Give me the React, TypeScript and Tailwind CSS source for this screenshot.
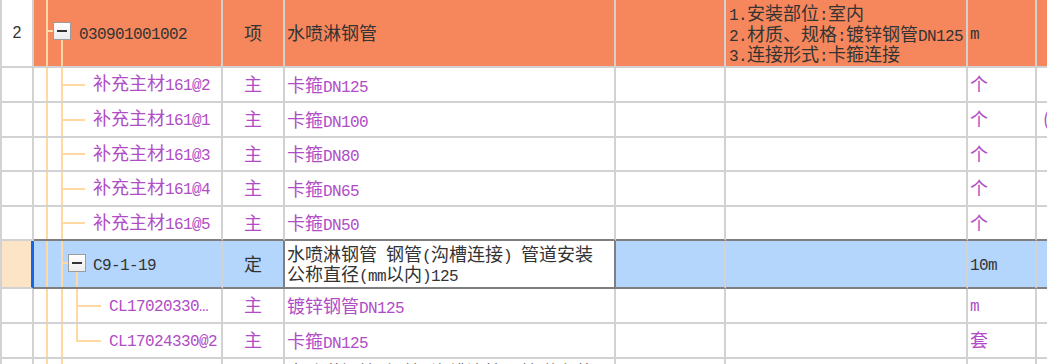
import React from "react";

const LAT = /([\u0000-\u00ff…]+)/;

// latin runs in a narrow mono face, cjk in Noto
const Txt = ({ s }: { s: string }) => (
  <span>
    {s.split(LAT).map((p, i) =>
      !p ? null : LAT.test(p) ? (
        <span key={i} className="font-['Liberation_Mono',monospace] text-[16px] tracking-[-0.6px]">
          {p}
        </span>
      ) : (
        <span key={i}>{p}</span>
      )
    )}
  </span>
);

const line = "absolute bg-[#ffd8a2]";

const MinusBox = ({ cls }: { cls: string }) => (
  <div
    className={
      "absolute w-[18px] h-[18px] border border-[#9c9c9c] bg-gradient-to-b from-white to-[#ececec] flex items-center justify-center " +
      cls
    }
  >
    <div className="w-[10px] h-[2px] bg-[#333]" />
  </div>
);

type RowProps = {
  h: string;
  kind: "head" | "child" | "sel" | "gchild" | "gchildLast" | "tail";
  num?: string;
  code?: string;
  type?: string;
  name?: string[];
  feat?: string[];
  unit?: string;
  last?: string;
  darkBottom?: boolean;
};

const Row = ({ h, kind, num, code, type, name, feat, unit, last, darkBottom }: RowProps) => {
  const sel = kind === "sel";
  const head = kind === "head";
  const bg = head ? "bg-[#f6875c]" : sel ? "bg-[#b5d6fc]" : "bg-white";
  const tone = head || sel || kind === "tail" ? "text-[#333]" : "text-[#b04cc6]";
  const bb = darkBottom || sel ? "border-b-[#7f7f7f]" : "border-b-[#d2d2d2]";
  const cell = `${h} shrink-0 border-b-2 ${bb} border-r-2 flex items-center overflow-hidden whitespace-nowrap`;
  const pad =
    kind === "head"
      ? "pl-[45px]"
      : kind === "gchild" || kind === "gchildLast"
      ? "pl-[75px]"
      : "pl-[59px]";

  return (
    <div className={`flex ${tone}`}>
      <div
        className={`w-[32px] ${h} shrink-0 border-b-2 border-b-[#d2d2d2] flex items-center justify-center font-['Liberation_Sans',sans-serif] text-[16px] text-[#333] ${
          sel ? "bg-[#fde4c6] border-r-[3px] border-r-[#1565e0]" : "bg-white border-r-2 border-r-[#d2d2d2]"
        }`}
      >
        {num}
      </div>

      <div className={`${cell} pb-[2px] ${bg} border-r-[#d2d2d2] w-[189px] relative ${pad}`}>
        <div className={`${line} left-[12px] top-0 bottom-0 w-[2px]`} />
        {head ? (
          <>
            <div className={`${line} left-[12px] top-[30px] w-[7px] h-[2px]`} />
            <MinusBox cls="left-[19px] top-[22px]" />
            <div className={`${line} left-[27px] top-[40px] bottom-0 w-[2px]`} />
          </>
        ) : (
          <div className={`${line} left-[27px] top-0 bottom-0 w-[2px]`} />
        )}
        {kind === "child" && (
          <div className={`${line} left-[27px] top-1/2 -translate-y-1/2 w-[24px] h-[2px]`} />
        )}
        {sel && (
          <>
            <div className={`${line} left-[27px] top-[21px] w-[7px] h-[2px]`} />
            <MinusBox cls="left-[34px] top-[13px]" />
            <div className={`${line} left-[42px] top-[31px] bottom-0 w-[2px]`} />
          </>
        )}
        {kind === "gchild" && (
          <>
            <div className={`${line} left-[42px] top-0 bottom-0 w-[2px]`} />
            <div className={`${line} left-[42px] top-1/2 -translate-y-1/2 w-[25px] h-[2px]`} />
          </>
        )}
        {kind === "gchildLast" && (
          <>
            <div className={`${line} left-[42px] top-0 h-[17px] w-[2px]`} />
            <div className={`${line} left-[42px] top-[16px] w-[25px] h-[2px]`} />
          </>
        )}
        {code && <Txt s={code} />}
      </div>

      <div
        className={`${cell} pb-[2px] ${bg} w-[62px] justify-center ${sel ? "border-r-[#7f7f7f]" : "border-r-[#d2d2d2]"}`}
      >
        {type}
      </div>

      <div
        className={`${cell} pb-[2px] w-[331px] pl-[2px] flex-col !items-start justify-center ${
          sel ? "bg-white border-r-[#7f7f7f]" : bg + " border-r-[#d2d2d2]"
        }`}
      >
        {name?.map((n, i) => (
          <div key={i} className="h-[20px] leading-[20px]">
            <Txt s={n} />
          </div>
        ))}
      </div>

      <div className={`${cell} ${bg} border-r-[#d2d2d2] w-[110px]`} />

      <div
        className={`${cell} ${bg} border-r-[#d2d2d2] w-[242px] pl-[3px] flex-col !items-start justify-center`}
      >
        {feat?.map((f, i) => (
          <div key={i} className="h-[20.5px] leading-[20.5px]">
            <Txt s={f} />
          </div>
        ))}
      </div>

      <div className={`${cell} pb-[2px] ${bg} border-r-[#d2d2d2] w-[69px] pl-[2px]`}>
        {unit && <Txt s={unit} />}
      </div>

      <div className={`${h} flex-1 min-w-0 border-b-2 ${bb} ${bg} flex items-center pl-[6px] pb-[2px] overflow-hidden whitespace-nowrap`}>
        {last}
      </div>
    </div>
  );
};

const children = [
  ["补充主材161@2", "卡箍DN125", ""],
  ["补充主材161@1", "卡箍DN100", "("],
  ["补充主材161@3", "卡箍DN80", ""],
  ["补充主材161@4", "卡箍DN65", ""],
  ["补充主材161@5", "卡箍DN50", ""],
];
const childH = ["h-[35px]", "h-[35px]", "h-[34px]", "h-[35px]", "h-[34px]"];

const App = () => {
  return (
    <div className="w-[1047px] h-[364px] overflow-hidden bg-white border-l-2 border-[#d2d2d2] font-['Noto_Sans_CJK_SC',sans-serif] text-[18px]">
      <Row
        h="h-[68px]"
        kind="head"
        num="2"
        code="030901001002"
        type="项"
        name={["水喷淋钢管"]}
        feat={["1.安装部位:室内", "2.材质、规格:镀锌钢管DN125", "3.连接形式:卡箍连接"]}
        unit="m"
      />
      {children.map((c, i) => (
        <Row
          key={i}
          h={childH[i]}
          kind="child"
          code={c[0]}
          type="主"
          name={[c[1]]}
          unit="个"
          last={c[2]}
          darkBottom={i === children.length - 1}
        />
      ))}
      <Row
        h="h-[48px]"
        kind="sel"
        code="C9-1-19"
        type="定"
        name={["水喷淋钢管 钢管(沟槽连接) 管道安装", "公称直径(mm以内)125"]}
        unit="10m"
      />
      <Row h="h-[35px]" kind="gchild" code="CL17020330…" type="主" name={["镀锌钢管DN125"]} unit="m" />
      <Row h="h-[35px]" kind="gchildLast" code="CL17024330@2" type="主" name={["卡箍DN125"]} unit="套" />
      <Row
        h="h-[48px]"
        kind="tail"
        name={["水喷淋钢管 钢管(沟槽连接) 管道安装", "公称直径(mm以内)125"]}
      />
    </div>
  );
};

export default App;
